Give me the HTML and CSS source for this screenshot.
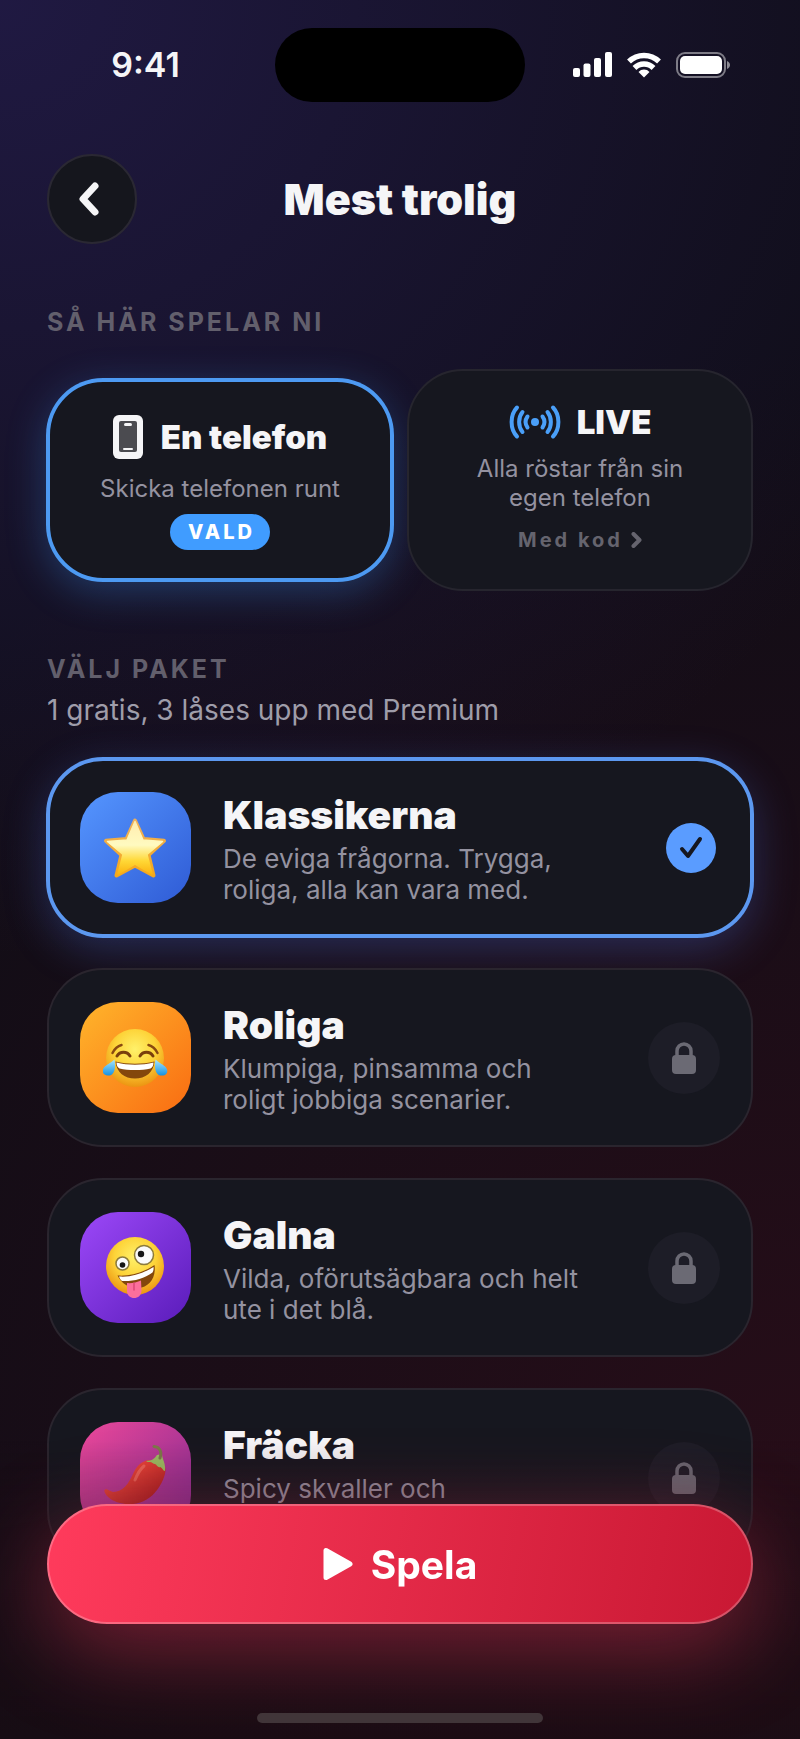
FILE: index.html
```html
<!DOCTYPE html>
<html lang="sv">
<head>
  <meta charset="UTF-8">
  <meta name="viewport" content="width=device-width, initial-scale=1.0">
  <title>Mest trolig</title>
  <link rel="stylesheet" href="styles.css">
</head>
<body>

  <!-- Status bar -->
  <div class="status-bar">
    <span class="time">9:41</span>
    <div class="island"></div>
    <div class="status-icons">
      <svg width="39" height="26" viewBox="0 0 39 26" fill="#fff">
        <rect x="0" y="16" width="7" height="9" rx="2"/>
        <rect x="10.500" y="11.500" width="7" height="13.500" rx="2"/>
        <rect x="21" y="6" width="7" height="19" rx="2"/>
        <rect x="32" y="0" width="7" height="25" rx="2"/>
      </svg>
      <svg width="34" height="26" viewBox="0 0 34 26" fill="none" stroke="#fff" stroke-width="5.500">
        <path d="M2 9.500a21.500 21.500 0 0 1 30 0"/>
        <path d="M7.500 16a13.500 13.500 0 0 1 19 0"/>
        <path d="M17 25.500l-5.500-5.500a7.500 7.500 0 0 1 11 0z" fill="#fff" stroke="none"/>
      </svg>
      <svg width="54" height="26" viewBox="0 0 54 26">
        <rect x="1" y="1" width="48" height="24" rx="8" fill="none" stroke="#fff" stroke-opacity=".45" stroke-width="2"/>
        <rect x="4" y="4" width="42" height="18" rx="5" fill="#fff"/>
        <path d="M51 9c4 1.500 4 6.500 0 8z" fill="#fff" fill-opacity=".5"/>
      </svg>
    </div>
  </div>

  <!-- Header -->
  <header class="header">
    <button class="back" aria-label="Tillbaka">
      <svg width="24" height="36" viewBox="0 0 24 36" fill="none" stroke="#f5f5f7" stroke-width="7" stroke-linecap="round" stroke-linejoin="round">
        <path d="M18 5L6 18l12 13"/>
      </svg>
    </button>
    <h1>Mest trolig</h1>
  </header>

  <main class="content">
    <h2 class="label">SÅ HÄR SPELAR NI</h2>

    <!-- Game mode -->
    <div class="modes">
      <button class="mode selected" aria-pressed="true">
        <span class="mode-title">
          <svg width="30" height="46" viewBox="0 0 30 46">
            <rect x="0" y="1" width="30" height="44" rx="6" fill="#f5f5f7"/>
            <rect x="6" y="7" width="18" height="31" rx="2" fill="#4b4b50"/>
            <rect x="11" y="9" width="8" height="3" rx="1.500" fill="#f5f5f7"/>
            <rect x="10" y="34" width="10" height="2" rx="1" fill="#f5f5f7"/>
          </svg>
          En telefon
        </span>
        <span class="mode-text">Skicka telefonen runt</span>
        <span class="badge">VALD</span>
      </button>
      <button class="mode" aria-pressed="false">
        <span class="mode-title">
          <svg width="52" height="36" viewBox="0 0 52 36" fill="none" stroke="#4a9ff8" stroke-width="4" stroke-linecap="round">
            <circle cx="26" cy="18" r="4" fill="#4a9ff8" stroke="none"/>
            <path d="M8 3.500C.800 11 .800 25 8 32.500M13.500 8C9 13.500 9 22.500 13.500 28M18.500 12.500c-2.500 3.500-2.500 7.500 0 11"/>
            <path d="M44 3.500c7.200 7.500 7.200 21.500 0 29M38.500 8c4.500 5.500 4.500 14.500 0 20M33.500 12.500c2.500 3.500 2.500 7.500 0 11"/>
          </svg>
          LIVE
        </span>
        <span class="mode-text">Alla röstar från sin egen telefon</span>
        <span class="code">Med kod
          <svg width="11" height="16" viewBox="0 0 11 16" fill="none" stroke="currentColor" stroke-width="4" stroke-linecap="round" stroke-linejoin="round">
            <path d="M2.500 2l6 6-6 6"/>
          </svg>
        </span>
      </button>
    </div>

    <h2 class="label">VÄLJ PAKET</h2>
    <p class="summary">1 gratis, 3 låses upp med Premium</p>

    <!-- Packs -->
    <div class="packs">
      <button class="pack selected" aria-pressed="true">
        <span class="tile tile-blue">
          <svg width="66" height="66" viewBox="0 0 66 66">
            <defs>
              <linearGradient id="star" x1="0" y1="0" x2="0" y2="1">
                <stop offset="0" stop-color="#ffedb0"/>
                <stop offset=".45" stop-color="#fffac0"/>
                <stop offset=".75" stop-color="#ffd836"/>
                <stop offset="1" stop-color="#fbb310"/>
              </linearGradient>
              <linearGradient id="starEdge" x1="0" y1="0" x2="0" y2="1">
                <stop offset="0" stop-color="#eeb05c"/>
                <stop offset="1" stop-color="#f5a81c"/>
              </linearGradient>
            </defs>
            <path d="M32 5.500l8.500 18.500 20.500 1.800-15.500 14.200 5 20.500L32 50.500 13.500 60.500l5-20.500L3 25.800 23.500 24z" fill="url(#star)" stroke="url(#starEdge)" stroke-width="4" stroke-linejoin="round"/>
            <path d="M32 6.500l8 18.500 19.500 1.500L44 39.500l5 19.500L32 49 15 59l5-19.500L4.500 26.500 24 25z" fill="url(#star)" stroke="url(#star)" stroke-width="1.500" stroke-linejoin="round"/>
          </svg>
        </span>
        <span class="pack-body">
          <span class="pack-title">Klassikerna</span>
          <span class="pack-text">De eviga frågorna. Trygga, roliga, alla kan vara med.</span>
        </span>
        <span class="check">
          <svg width="24" height="24" viewBox="0 0 24 24" fill="none" stroke="#16171f" stroke-width="4" stroke-linecap="round" stroke-linejoin="round">
            <path d="M3 13l6 7L21 3"/>
          </svg>
        </span>
      </button>

      <button class="pack">
        <span class="tile tile-orange">
          <svg width="66" height="66" viewBox="0 0 66 66">
            <defs>
              <radialGradient id="face" cx=".5" cy=".35" r=".65">
                <stop offset="0" stop-color="#fff16a"/>
                <stop offset=".55" stop-color="#fdd338"/>
                <stop offset="1" stop-color="#ec9412"/>
              </radialGradient>
              <linearGradient id="tear" x1="0" y1="0" x2="0" y2="1">
                <stop offset="0" stop-color="#a5e5ff"/>
                <stop offset="1" stop-color="#1692e0"/>
              </linearGradient>
            </defs>
            <circle cx="32" cy="33" r="29" fill="url(#face)"/>
            <path d="M9.500 28c2-4 5-7 9-8M54.500 28c-2-4-5-7-9-8" fill="none" stroke="#8a4a10" stroke-width="2.500" stroke-linecap="round"/>
            <path d="M14 31c3-5 10-5 13 0M37 31c3-5 10-5 13 0" fill="none" stroke="#7a3f0c" stroke-width="3" stroke-linecap="round"/>
            <path d="M12.500 36.500c12 3 27 3 39 0-1 11-9 17-19.500 17S13.500 47.500 12.500 36.500z" fill="#84470c"/>
            <path d="M13.500 37.500c11.500 3 25.500 3 37 0 0 3-1 5-3 6-9 2-22 2-31 0-2-1-3-3-3-6z" fill="#fff"/>
            <path d="M11.500 34.500c1.500 9 0 16-6.500 16-5.500 0-6.500-5-4-8 2-2.500 6.500-4.500 10.500-8zM52.500 34.500c-1.500 9 0 16 6.500 16 5.500 0 6.500-5 4-8-2-2.500-6.500-4.500-10.500-8z" fill="url(#tear)"/>
          </svg>
        </span>
        <span class="pack-body">
          <span class="pack-title">Roliga</span>
          <span class="pack-text">Klumpiga, pinsamma och roligt jobbiga scenarier.</span>
        </span>
        <span class="lock">
          <svg width="24" height="32" viewBox="0 0 24 32">
            <path d="M5 15V9a7 7 0 0 1 14 0v6" fill="none" stroke="#6b6a74" stroke-width="3.500"/>
            <rect x="0" y="13" width="24" height="19" rx="4" fill="#6b6a74"/>
          </svg>
        </span>
      </button>

      <button class="pack">
        <span class="tile tile-purple">
          <svg width="66" height="66" viewBox="0 0 66 66">
            <circle cx="32" cy="31" r="29" fill="url(#face)"/>
            <circle cx="19.500" cy="28.500" r="6.500" fill="#fafafa" stroke="#8b7a3c" stroke-width="1.500"/>
            <circle cx="41" cy="20" r="9.500" fill="#fafafa" stroke="#8b7a3c" stroke-width="1.500"/>
            <circle cx="19.500" cy="30" r="2.800" fill="#151515"/>
            <circle cx="38" cy="19" r="3.200" fill="#151515"/>
            <path d="M14.500 40.500c12 1 26-3 37-10.500 2 13-6 22.500-16 23-9 .5-17-4-21-12.500z" fill="#84470c"/>
            <path d="M16 41.500c12 1 24-3 34.500-9.500.3 2 0 4-1 5.500C41 44 30 46.500 19 46c-1.500-1-2.500-3-3-4.500z" fill="#fff"/>
            <path d="M24 48c4 .5 10-.5 14-2.500l.5 10c0 10-14.500 10-14.500.5z" fill="#fb6f9c"/>
            <path d="M31 48v7" stroke="#dc4677" stroke-width="1.500" stroke-linecap="round"/>
          </svg>
        </span>
        <span class="pack-body">
          <span class="pack-title">Galna</span>
          <span class="pack-text">Vilda, oförutsägbara och helt ute i det blå.</span>
        </span>
        <span class="lock">
          <svg width="24" height="32" viewBox="0 0 24 32">
            <path d="M5 15V9a7 7 0 0 1 14 0v6" fill="none" stroke="#6b6a74" stroke-width="3.500"/>
            <rect x="0" y="13" width="24" height="19" rx="4" fill="#6b6a74"/>
          </svg>
        </span>
      </button>

      <button class="pack">
        <span class="tile tile-pink">
          <svg width="66" height="66" viewBox="0 0 66 66">
            <defs>
              <linearGradient id="chili" x1="0" y1="0" x2="1" y2="1">
                <stop offset=".3" stop-color="#f0473a"/>
                <stop offset="1" stop-color="#9c1418"/>
              </linearGradient>
            </defs>
            <path d="M46 15c-8 1-13 7-16 14-4 9-10 18-20 18-3-.5-6-3.500-8-2.500-2 1.500 1 7 8 11 15 7 32 4 42-8 7-8 11-18 10.500-24-1-6-8.500-9-16.500-8.500z" fill="url(#chili)"/>
            <path d="M41 21c-5 4-7 9-9 14" fill="none" stroke="#ff8a78" stroke-opacity=".5" stroke-width="3" stroke-linecap="round"/>
            <path d="M43 16c6 0 9-3 11-6l5-1c0 5 4 9 3 17-2 0-3-4-5-4-2 1-3-2-5-3-2 0-3-2-5-2-2 0-3 0-4-1z" fill="#9cc063"/>
            <path d="M57 13c2-6 0-11-6-11.500" fill="none" stroke="#7d7a4a" stroke-width="3" stroke-linecap="round"/>
          </svg>
        </span>
        <span class="pack-body">
          <span class="pack-title">Fräcka</span>
          <span class="pack-text">Spicy skvaller och</span>
        </span>
        <span class="lock">
          <svg width="24" height="32" viewBox="0 0 24 32">
            <path d="M5 15V9a7 7 0 0 1 14 0v6" fill="none" stroke="#6b6a74" stroke-width="3.500"/>
            <rect x="0" y="13" width="24" height="19" rx="4" fill="#6b6a74"/>
          </svg>
        </span>
      </button>
    </div>
  </main>

  <!-- Play button, stays on top of the list -->
  <footer class="footer">
    <button class="play">
      <svg width="30" height="34" viewBox="0 0 30 34">
        <path d="M3 3.500v27L27 17z" fill="#fff" stroke="#fff" stroke-width="5" stroke-linejoin="round"/>
      </svg>
      Spela
    </button>
    <div class="home-indicator"></div>
  </footer>

</body>
</html>
```

FILE: styles.css
```css
* {
  box-sizing: border-box;
}

body {
  margin: 0;
  height: 100vh;
  overflow: hidden;
  font-family: Inter, "Liberation Sans", sans-serif;
  color: #f5f5f7;
  background:
    radial-gradient(130% 55% at 0% 0%, rgba(52, 40, 120, 0.45), rgba(52, 40, 120, 0) 100%),
    radial-gradient(150% 65% at 100% 85%, rgba(100, 14, 30, 0.28), rgba(100, 14, 30, 0) 100%),
    #0f0d16;
}

h1, h2, p {
  margin: 0;
}

button {
  font-family: inherit;
  color: inherit;
  cursor: pointer;
}

svg {
  display: block;
  flex: none;
}

.status-bar {
  display: grid;
  grid-template-columns: 1fr 250px 1fr;
  align-items: center;
  height: 129px;
}

.time {
  padding-left: 16px;
  text-align: center;
  font-size: 34px;
  font-weight: 600;
}

.island {
  height: 74px;
  border-radius: 37px;
  background: #000;
}

.status-icons {
  display: flex;
  justify-content: center;
  gap: 15px;
  padding-right: 22px;
}

.header {
  display: grid;
  grid-template-columns: 90px 1fr 90px;
  align-items: center;
  margin-top: 25px;
  padding: 0 47px;
}

.header h1 {
  text-align: center;
  font-size: 43px;
  font-weight: 900;
}

.back {
  display: flex;
  align-items: center;
  justify-content: center;
  height: 90px;
  padding: 0 6px 0 0;
  border: 2px solid #2a2833;
  border-radius: 50%;
  background: #15161d;
}

.content {
  padding: 0 47px;
}

.label {
  margin-top: 63px;
  line-height: 30px;
  font-size: 25px;
  font-weight: 700;
  letter-spacing: 3px;
  color: #625f6c;
}

.modes {
  display: grid;
  grid-template-columns: 1fr 1fr;
  align-items: center;
  gap: 14px;
  margin-top: 32px;
}

.mode {
  display: flex;
  flex-direction: column;
  align-items: center;
  padding: 33px 50px;
  border: 2px solid #26252e;
  border-radius: 56px;
  background: #16171f;
}

.mode.selected {
  padding: 32px 30px 28px;
  border: 3px solid #4d9af2;
  box-shadow: 0 0 0 1px #4d9af2, 0 10px 40px rgba(64, 156, 255, 0.3);
}

.mode-title {
  display: flex;
  align-items: center;
  gap: 18px;
  line-height: 36px;
  font-size: 33px;
  font-weight: 900;
}

.mode:not(.selected) .mode-title {
  gap: 16px;
}

.mode-text {
  margin-top: 14px;
  line-height: 29px;
  font-size: 24px;
  font-weight: 400;
  color: #9492a0;
}

.badge {
  margin-top: 11px;
  padding: 0 15px 0 18px;
  border-radius: 18px;
  line-height: 36px;
  font-size: 20px;
  font-weight: 800;
  letter-spacing: 3px;
  color: #fff;
  background: #409cff;
}

.code {
  display: flex;
  align-items: center;
  gap: 8px;
  margin-top: 12px;
  line-height: 32px;
  font-size: 20px;
  font-weight: 700;
  letter-spacing: 3px;
  color: #65646e;
}

.summary {
  margin-top: 9px;
  line-height: 34px;
  font-size: 28px;
  font-weight: 400;
  color: #9f9daa;
}

.packs {
  display: flex;
  flex-direction: column;
  gap: 31px;
  margin-top: 31px;
}

.pack {
  display: flex;
  align-items: center;
  gap: 32px;
  padding: 32px 31px;
  border: 2px solid #2a252e;
  border-radius: 56px;
  text-align: left;
  background: #16171f;
}

.pack.selected {
  padding: 31px 30px;
  border: 3px solid #5c98f0;
  box-shadow: 0 0 0 1px #5c98f0, 0 12px 44px rgba(84, 130, 255, 0.28);
}

.tile {
  display: flex;
  align-items: center;
  justify-content: center;
  flex: none;
  width: 111px;
  height: 111px;
  border-radius: 38px;
}

.tile-blue {
  background: linear-gradient(135deg, #5596ff, #2f5bd5);
}

.tile-orange {
  background: linear-gradient(135deg, #ffb52b, #f96c12);
}

.tile-purple {
  background: linear-gradient(135deg, #9c48f8, #5a1cba);
}

.tile-pink {
  background: linear-gradient(135deg, #ec4899, #7e2a94);
}

.pack-body {
  display: flex;
  flex: 1;
  flex-direction: column;
  gap: 4px;
  min-height: 114px;
  margin: -2px 0;
}

.pack-title {
  line-height: 48px;
  font-size: 39px;
  font-weight: 900;
}

.pack-text {
  max-width: 364px;
  line-height: 31px;
  font-size: 26px;
  font-weight: 400;
  color: #9492a0;
}

.check,
.lock {
  display: flex;
  align-items: center;
  justify-content: center;
  flex: none;
  border-radius: 50%;
}

.check {
  width: 50px;
  height: 50px;
  margin-right: 4px;
  background: #5a9cff;
}

.lock {
  width: 72px;
  height: 72px;
  background: #1d1d27;
}

.footer {
  position: fixed;
  right: 0;
  bottom: 0;
  left: 0;
  display: flex;
  flex-direction: column;
  align-items: center;
  gap: 89px;
  padding: 64px 47px 16px;
  background: linear-gradient(rgba(24, 13, 20, 0), rgba(24, 13, 20, 0.3) 30%, rgba(24, 13, 18, 0.5));
}

.play {
  display: flex;
  align-items: center;
  justify-content: center;
  gap: 18px;
  width: 100%;
  height: 120px;
  border: 2px solid rgba(255, 255, 255, 0.25);
  border-radius: 60px;
  font-size: 39px;
  font-weight: 700;
  color: #fff;
  background: linear-gradient(100deg, #ff3b5c, #c81833) border-box;
  box-shadow: 0 24px 90px rgba(255, 59, 92, 0.42);
}

.home-indicator {
  width: 286px;
  height: 10px;
  border-radius: 5px;
  background: #413539;
}
```
